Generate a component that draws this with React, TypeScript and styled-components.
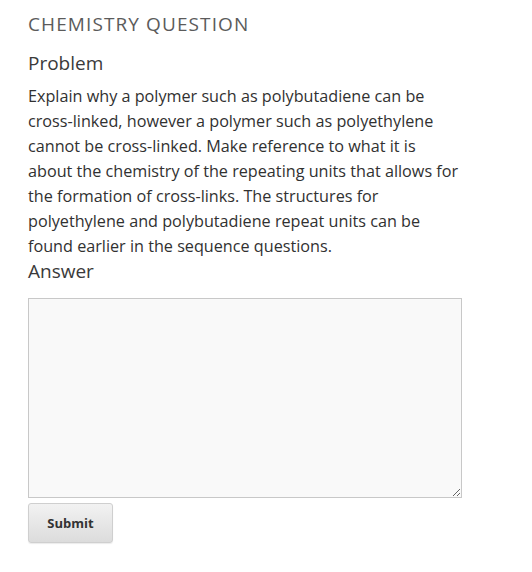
import React from "react";
import styled, { createGlobalStyle } from "styled-components";

const Global = createGlobalStyle`
  html, body { margin: 0; padding: 0; background: #fff; }
  body { font-family: "Open Sans", "Noto Sans", sans-serif; }
`;

const Page = styled.div`
  padding: 11px 20px 20px 28px;
  width: 434px;
`;

const Title = styled.h2`
  margin: 0;
  font-size: 19px;
  font-weight: 400;
  letter-spacing: 1.1px;
  color: #5b5b5b;
  line-height: 26px;
`;

const SubHeading = styled.h3<{ $top: number }>`
  margin: ${(p) => p.$top}px 0 0 0;
  font-size: 19px;
  font-weight: 400;
  color: #3a3a3a;
  line-height: 24px;
`;

const Body = styled.p`
  margin: 9px 0 0 0;
  font-size: 16.2px;
  line-height: 25px;
  color: #313131;
  width: 432px;
`;

const Answer = styled.textarea`
  display: block;
  box-sizing: border-box;
  width: 434px;
  height: 200px;
  margin: 15px 0 0 0;
  background: #f9f9f9;
  border: 1px solid #c8c8c8;
  border-radius: 0;
  resize: both;
  font-family: inherit;
`;

const SubmitButton = styled.button`
  display: block;
  margin-top: 5px;
  width: 85px;
  height: 40px;
  border: 1px solid #cfcfcf;
  border-radius: 3px;
  background: linear-gradient(#f2f2f2, #dcdcdc);
  font-family: "Open Sans", sans-serif;
  font-weight: 700;
  font-size: 13px;
  color: #333;
  box-shadow: 0 1px 1px rgba(0,0,0,0.08);
`;

export default function App() {
  return (
    <>
      <Global />
      <Page>
        <Title>CHEMISTRY QUESTION</Title>
        <SubHeading $top={14}>Problem</SubHeading>
        <Body>
          Explain why a polymer such as polybutadiene can be cross-linked, however a polymer such as polyethylene cannot be cross-linked. Make reference to what it is about the chemistry of the repeating units that allows for the formation of cross-links. The structures for polyethylene and polybutadiene repeat units can be found earlier in the sequence questions.
        </Body>
        <SubHeading $top={0}>Answer</SubHeading>
        <Answer />
        <SubmitButton>Submit</SubmitButton>
      </Page>
    </>
  );
}
